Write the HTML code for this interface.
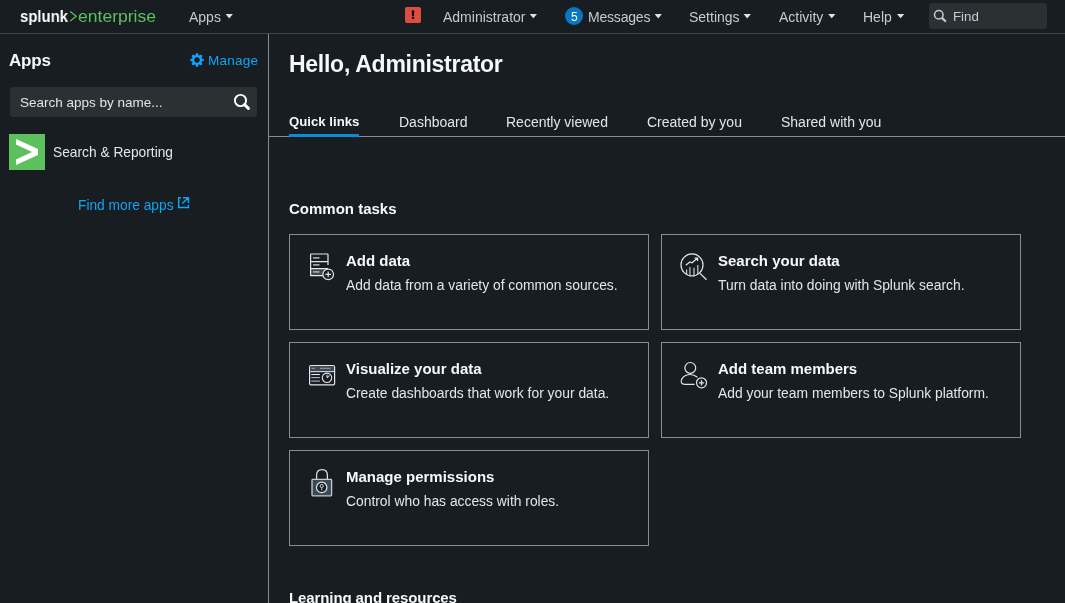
<!DOCTYPE html>
<html><head><meta charset="utf-8">
<style>
*{margin:0;padding:0;box-sizing:border-box}
html,body{width:1065px;height:603px;overflow:hidden;background:#171d21;font-family:"Liberation Sans",sans-serif;color:#c3cbd4}
.a{position:absolute;white-space:nowrap;will-change:transform}
.nav{font-size:14px;line-height:14px;color:#c3cbd4}
.card{position:absolute;width:360px;height:96px;border:1px solid #818d99}
.ct{position:absolute;will-change:transform;white-space:nowrap;left:56px;top:18px;font-size:15px;font-weight:bold;color:#f7f8fa;line-height:15px}
.cd{position:absolute;will-change:transform;white-space:nowrap;left:56px;top:43px;font-size:13.85px;color:#e1e6eb;line-height:14px}
.s{position:absolute;left:0;top:0;overflow:visible}
</style></head><body>
<div class="a" style="left:0;top:33px;width:1065px;height:1px;background:#3c444d"></div>
<!-- logo -->
<div class="a" style="left:20px;top:7.8px;font-size:17px;line-height:18px;font-weight:bold;color:#fff;transform:scaleX(0.877);transform-origin:0 0">splunk</div>
<svg class="s" width="1065" height="603"><path d="M70.2 11.6L76.2 16.3L70.2 21" fill="none" stroke="#5cc05c" stroke-width="1.25"/></svg>
<div class="a" style="left:78px;top:7.8px;font-size:17px;line-height:18px;color:#5cc05c;transform:scaleX(1.032);transform-origin:0 0">enterprise</div>

<div class="a nav" style="left:189px;top:9.5px">Apps</div>
<svg class="s" width="1065" height="603"><path d="M225.6 14H232.9L229.25 18.4Z" fill="#dfe3e8"/></svg>

<div class="a" style="left:405px;top:7px;width:16px;height:16px;background:#dc4e41;border-radius:2px"></div>
<svg class="s" width="1065" height="603"><path d="M411.7 10.6H414.3L413.8 16.3H412.2Z" fill="#000"/><rect x="411.9" y="16.9" width="2.2" height="2" fill="#000"/></svg>

<div class="a nav" style="left:443px;top:9.5px">Administrator</div>
<svg class="s" width="1065" height="603"><path d="M529.7 14H537L533.35 18.3Z" fill="#dfe3e8"/></svg>

<div class="a" style="left:565px;top:6.5px;width:18px;height:18px;border-radius:50%;background:#0877c4"></div>
<div class="a" style="left:570.5px;top:11px;font-size:12px;line-height:12px;color:#fff">5</div>
<div class="a nav" style="left:587.5px;top:9.5px;letter-spacing:-0.2px">Messages</div>
<svg class="s" width="1065" height="603"><path d="M654.6 14H661.9L658.25 18.4Z" fill="#dfe3e8"/></svg>

<div class="a nav" style="left:689px;top:9.5px">Settings</div>
<svg class="s" width="1065" height="603"><path d="M743.6 14H750.9L747.25 18.4Z" fill="#dfe3e8"/></svg>

<div class="a nav" style="left:779px;top:9.5px">Activity</div>
<svg class="s" width="1065" height="603"><path d="M828.15 14H835.45L831.8 18.3Z" fill="#dfe3e8"/></svg>

<div class="a nav" style="left:863px;top:9.5px">Help</div>
<svg class="s" width="1065" height="603"><path d="M896.95 14H904.25L900.6 18.3Z" fill="#dfe3e8"/></svg>

<div class="a" style="left:929px;top:3px;width:118px;height:26px;background:#2b3033;border-radius:3px"></div>
<svg class="s" width="1065" height="603"><circle cx="938.8" cy="14.8" r="4.3" fill="none" stroke="#c3cbd4" stroke-width="1.5"/><line x1="942.2" y1="18.2" x2="945.2" y2="21" stroke="#c3cbd4" stroke-width="2.3" stroke-linecap="round"/></svg>
<div class="a" style="left:952.5px;top:10.3px;font-size:13.3px;line-height:13px;color:#c3cbd4">Find</div>

<!-- sidebar -->
<div class="a" style="left:268px;top:34px;width:1px;height:569px;background:#818d99"></div>
<div class="a" style="left:9px;top:52px;font-size:17px;line-height:17px;font-weight:bold;color:#f7f8fa;letter-spacing:-0.2px">Apps</div>
<svg class="a" style="left:190px;top:53px" width="14" height="14" viewBox="0 0 14 14"><g fill="#10a5f5"><path d="M5.9 0.3H8.1L8.5 3H5.5Z" transform="rotate(0 7 7)"/><path d="M5.9 0.3H8.1L8.5 3H5.5Z" transform="rotate(45 7 7)"/><path d="M5.9 0.3H8.1L8.5 3H5.5Z" transform="rotate(90 7 7)"/><path d="M5.9 0.3H8.1L8.5 3H5.5Z" transform="rotate(135 7 7)"/><path d="M5.9 0.3H8.1L8.5 3H5.5Z" transform="rotate(180 7 7)"/><path d="M5.9 0.3H8.1L8.5 3H5.5Z" transform="rotate(225 7 7)"/><path d="M5.9 0.3H8.1L8.5 3H5.5Z" transform="rotate(270 7 7)"/><path d="M5.9 0.3H8.1L8.5 3H5.5Z" transform="rotate(315 7 7)"/></g><circle cx="7" cy="7" r="3.9" fill="none" stroke="#10a5f5" stroke-width="2.4"/></svg>
<div class="a" style="left:207.5px;top:54px;font-size:13.5px;line-height:14px;color:#10a5f5;letter-spacing:0.25px">Manage</div>

<div class="a" style="left:10px;top:87px;width:247px;height:30px;background:#2b3033;border-radius:3px"></div>
<div class="a" style="left:20px;top:96px;font-size:13.5px;line-height:14px;color:#e1e6eb">Search apps by name...</div>
<svg class="s" width="1065" height="603"><circle cx="240.5" cy="100.5" r="5.6" fill="none" stroke="#fff" stroke-width="1.9"/><line x1="244.6" y1="104.6" x2="248.4" y2="108.4" stroke="#fff" stroke-width="2.9" stroke-linecap="round"/></svg>

<div class="a" style="left:9px;top:134px;width:36px;height:36px;background:#5cc05c"></div>
<svg class="s" width="1065" height="603"><polygon points="16,139 38,149 38,155 16,165 16,159.5 32,152 16,144.6" fill="#fff"/></svg>
<div class="a" style="left:53px;top:146px;font-size:13.75px;line-height:14px;color:#e1e6eb">Search &amp; Reporting</div>

<div class="a" style="left:78px;top:199px;font-size:13.75px;line-height:14px;color:#10a5f5">Find more apps</div>
<svg class="s" width="1065" height="603"><path d="M180.9 197.7H178.7V207.4H188.4V204.8M183 197.7H188.4V203.1M182.3 203.4L188 197.9" fill="none" stroke="#10a5f5" stroke-width="1.45"/></svg>

<!-- main -->
<div class="a" style="left:289px;top:52.5px;font-size:23px;line-height:23px;font-weight:bold;color:#f7f8fa;letter-spacing:-0.27px">Hello, Administrator</div>

<div class="a" style="left:289px;top:115px;font-size:13.2px;line-height:14px;font-weight:bold;color:#f7f8fa">Quick links</div>
<div class="a" style="left:399px;top:115px;font-size:14px;line-height:14px;color:#e1e6eb">Dashboard</div>
<div class="a" style="left:506px;top:115px;font-size:14px;line-height:14px;color:#e1e6eb">Recently viewed</div>
<div class="a" style="left:647px;top:115px;font-size:14px;line-height:14px;color:#e1e6eb">Created by you</div>
<div class="a" style="left:781px;top:115px;font-size:14px;line-height:14px;color:#e1e6eb">Shared with you</div>
<div class="a" style="left:269px;top:136px;width:796px;height:1px;background:#818d99"></div>
<div class="a" style="left:289px;top:134px;width:70px;height:3px;background:#0a8cd9"></div>

<div class="a" style="left:289px;top:200.5px;font-size:15px;line-height:15px;font-weight:bold;color:#f7f8fa">Common tasks</div>

<div class="card" style="left:289px;top:234px">
  <div class="ct">Add data</div>
  <div class="cd">Add data from a variety of common sources.</div>
</div>
<div class="card" style="left:661px;top:234px">
  <div class="ct">Search your data</div>
  <div class="cd">Turn data into doing with Splunk search.</div>
</div>
<div class="card" style="left:289px;top:342px">
  <div class="ct">Visualize your data</div>
  <div class="cd">Create dashboards that work for your data.</div>
</div>
<div class="card" style="left:661px;top:342px">
  <div class="ct">Add team members</div>
  <div class="cd">Add your team members to Splunk platform.</div>
</div>
<div class="card" style="left:289px;top:450px">
  <div class="ct">Manage permissions</div>
  <div class="cd">Control who has access with roles.</div>
</div>

<!-- icons -->
<svg class="s" width="1065" height="603" fill="none" stroke-linecap="butt">
  <!-- add data -->
  <rect x="311" y="269" width="17" height="6.2" fill="#3c4a57"/>
  <path d="M328 265V254.4Q328 254 327.6 254H311Q310.6 254 310.6 254.4V275.2Q310.6 275.6 311 275.6H323" stroke="#e1e6eb" stroke-width="1.2"/>
  <path d="M311 261.6H328M311 268.6H328" stroke="#e1e6eb" stroke-width="1.2"/>
  <path d="M313 257.9H319.5M313 264.9H319.5M313 271.9H319.5" stroke="#9aa4ae" stroke-width="1.6"/>
  <circle cx="328.2" cy="274.4" r="5.3" fill="#171d21" stroke="#e1e6eb" stroke-width="1.2"/>
  <path d="M325.4 274.4H331M328.2 271.6V277.2" stroke="#e1e6eb" stroke-width="1.2"/>
  <!-- search data -->
  <circle cx="692" cy="264.9" r="11" stroke="#e1e6eb" stroke-width="1.2"/>
  <path d="M700 273.4L706.5 279.8" stroke="#e1e6eb" stroke-width="1.3"/>
  <path d="M686.6 269.5V275M689.9 267V276.4M694 267.8V276.4M697.8 264.9V274.4" stroke="#c3cbd4" stroke-width="1.2"/>
  <path d="M685.8 265.3L689.9 262L692 262.8L697.4 258.3M694.6 258.1H697.6V261.1" stroke="#e1e6eb" stroke-width="1.2"/>
  <!-- visualize -->
  <rect x="309.6" y="365.6" width="25" height="19.2" rx="1.3" fill="#171d21" stroke="#e1e6eb" stroke-width="1.2"/>
  <rect x="310.2" y="366.2" width="23.8" height="5" fill="#3c4a57"/>
  <path d="M310.2 371.6H334" stroke="#c3cbd4" stroke-width="1.2"/>
  <path d="M311.5 368.3H315M320 368.3H330.5" stroke="#9aa4ae" stroke-width="1"/>
  <path d="M311.2 374.5H319.9" stroke="#e1e6eb" stroke-width="1.1"/>
  <path d="M311.2 377.6H319.9" stroke="#b0b8c0" stroke-width="1.1"/>
  <path d="M311.2 381.1H319.9" stroke="#8c98a4" stroke-width="1.4"/>
  <circle cx="327" cy="377.8" r="4.7" stroke="#e1e6eb" stroke-width="1.1"/>
  <path d="M327 377.8L329.5 375.3M327 377.8V374.5" stroke="#c3cbd4" stroke-width="1.1"/>
  <!-- team -->
  <circle cx="690.3" cy="367.9" r="5.4" stroke="#e1e6eb" stroke-width="1.2"/>
  <path d="M697.4 377.3Q694 374.5 690.3 374.5Q685 374.5 682.2 378.3Q680.6 380.5 681.3 382.5Q682 384.2 684.5 384.3H694.5" stroke="#e1e6eb" stroke-width="1.2"/>
  <circle cx="701.5" cy="382.8" r="5" fill="#171d21" stroke="#e1e6eb" stroke-width="1.2"/>
  <path d="M698.9 382.8H704.1M701.5 380.2V385.4" stroke="#e1e6eb" stroke-width="1.3"/>
  <!-- lock -->
  <path d="M316.6 479.3V475.2Q316.6 469.6 322 469.6Q327.4 469.6 327.4 475.2V479.3" stroke="#e1e6eb" stroke-width="1.2"/>
  <rect x="312" y="479.4" width="19.6" height="16.4" rx="0.8" fill="#3c4a57" stroke="#c3cbd4" stroke-width="1.3"/>
  <circle cx="321.7" cy="487.4" r="5.2" fill="#171d21" stroke="#e1e6eb" stroke-width="1.2"/>
  <circle cx="321.7" cy="486" r="1.6" stroke="#e1e6eb" stroke-width="0.9"/>
  <path d="M321.7 487.6V490.6" stroke="#9aa4ae" stroke-width="1.2"/>
</svg>

<div class="a" style="left:289px;top:590px;font-size:15px;line-height:15px;font-weight:bold;color:#f7f8fa;letter-spacing:-0.1px">Learning and resources</div>
</body></html>
